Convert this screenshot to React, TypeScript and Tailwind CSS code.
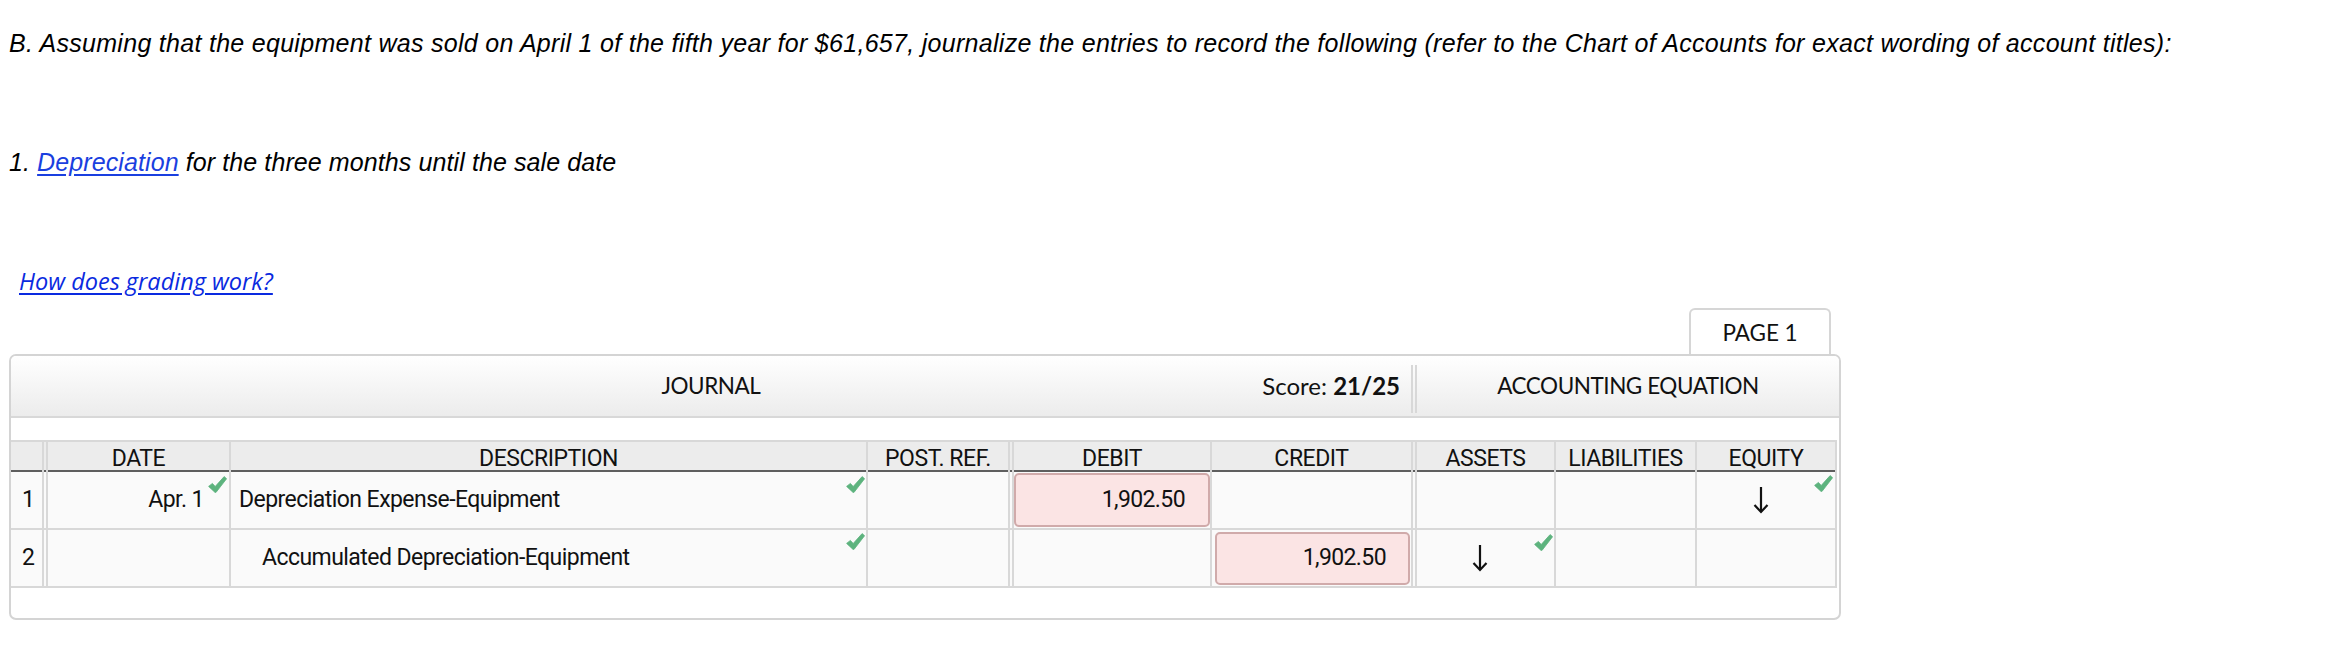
const Q1 =
  'B. Assuming that the equipment was sold on April 1 of the fifth year for $61,657, journalize the entries to record the following (refer to the Chart of Accounts for exact wording of account titles):';
const HOW = 'How does grading work?';

function Check({ className }: { className: string }) {
  return (
    <svg
      className={`absolute ${className}`}
      width="19"
      height="17"
      viewBox="0 0 19 17"
      fill="#5db37e"
      stroke="#5db37e"
      strokeWidth="0.8"
      strokeLinejoin="round"
    >
      <path d="M0.6 10.4 L4.4 7.4 L7.2 10.5 L16.1 0.6 L18.6 2.7 L8.1 16.3 Q7.4 16.9 6.8 16.2 Z" />
    </svg>
  );
}

function Arrow() {
  return (
    <svg width="16" height="28" viewBox="0 0 16 28" fill="none" stroke="#111" strokeWidth="2.2">
      <line x1="8" y1="1" x2="8" y2="26" />
      <path d="M1.5 19 L8 26 L14.5 19" strokeLinejoin="miter" />
    </svg>
  );
}

const cols = 'grid grid-cols-[37px_183px_637px_146px_198px_205px_139px_141px_140px] w-[1826px]';
const hcell = 'h-full flex items-center justify-center';
const b = 'border-r-2 border-[#d8d8d8]';
const bd = 'border-r-[6px] border-double border-[#d8d8d8]';

export default function App() {
  return (
    <div className="relative w-[2346px] h-[666px] bg-white overflow-hidden text-black">
      <p className="pt-[29px] pl-[9px] text-[25px] leading-[28px] tracking-[0.29px] italic font-['Liberation_Sans',Arial,sans-serif] whitespace-nowrap">
        {Q1}
      </p>
      <p className="mt-[91px] pl-[9px] text-[25px] leading-[28px] tracking-[0.1px] italic font-['Liberation_Sans',Arial,sans-serif] whitespace-nowrap">
        1. <span className="text-[#1a3fe0] underline underline-offset-[3px]">Depreciation</span> for the three months until the
        sale date
      </p>
      <p className="mt-[91px] pl-[19px] text-[23.5px] leading-[28px] italic font-['Open_Sans',sans-serif]">
        <span className="text-[#0a2ae0] underline underline-offset-[3px]">{HOW}</span>
      </p>

      <div className="mt-[13px] ml-[9px] w-[1832px] font-['Roboto',sans-serif] text-[23px] tracking-[-0.55px] text-[#111]">
        <div className="flex justify-end pr-[10px]">
          <div className="w-[142px] h-[46px] border-2 border-b-0 border-[#d6d6d6] rounded-t-[6px] bg-white flex items-center justify-center pt-[2px] font-['Lato',sans-serif] text-[22.5px] tracking-[-0.1px]">
            PAGE 1
          </div>
        </div>
        <div className="h-[266px] border-2 border-[#d4d4d4] rounded-[7px] overflow-hidden bg-white">
          <div className="h-[62px] flex border-b-2 border-[#d8d8d8] bg-linear-to-b from-white to-[#ececec] font-['Lato',sans-serif] text-[22.5px] tracking-[-0.45px]">
            <div className="w-[1400px] grid grid-cols-[1fr_auto_1fr] items-center">
              <div />
              <div>JOURNAL</div>
              <div className="justify-self-end pr-[11px] text-[24px] tracking-[0px]">
                Score: <span className="font-bold">21/25</span>
              </div>
            </div>
            <div className="w-[6px] mt-[9px] mb-[3px] border-l-2 border-r-2 border-[#d8d8d8]" />
            <div className="flex-1 flex items-center justify-center">ACCOUNTING EQUATION</div>
          </div>

          <div className="mt-[22px]">
            <div className={`${cols} h-[32px] bg-[#ececec] border-t-2 border-[#d8d8d8] border-b-2 border-b-[#5e5e5e] tracking-[-0.45px]`}>
              <div className={`h-full ${bd}`} />
              <div className={`${hcell} ${b}`}>DATE</div>
              <div className={`${hcell} ${b}`}>DESCRIPTION</div>
              <div className={`${hcell} ${bd}`}>POST. REF.</div>
              <div className={`${hcell} ${b}`}>DEBIT</div>
              <div className={`${hcell} ${bd}`}>CREDIT</div>
              <div className={`${hcell} ${b}`}>ASSETS</div>
              <div className={`${hcell} ${b}`}>LIABILITIES</div>
              <div className={`${hcell} ${b}`}>EQUITY</div>
            </div>

            <div className={`${cols} h-[58px] bg-[#fafafa] border-b-2 border-[#d8d8d8]`}>
              <div className={`flex items-center pl-[11px] ${bd}`}>1</div>
              <div className={`relative flex items-center justify-end pr-[25px] ${b}`}>
                Apr. 1
                <Check className="top-[4px] right-[2px]" />
              </div>
              <div className={`relative flex items-center pl-[8px] ${b}`}>
                Depreciation Expense-Equipment
                <Check className="top-[4px] right-[1px]" />
              </div>
              <div className={bd} />
              <div className={`${b} py-[1px]`}>
                <div className="h-full flex items-center justify-end pr-[23px] bg-[#fbe4e4] border-2 border-[#d0aaaa] rounded-[5px] tracking-[-0.6px]">
                  1,902.50
                </div>
              </div>
              <div className={bd} />
              <div className={b} />
              <div className={b} />
              <div className={`relative flex items-center justify-center pr-[11px] ${b}`}>
                <Arrow />
                <Check className="top-[3px] right-[2px]" />
              </div>
            </div>

            <div className={`${cols} h-[58px] bg-[#fafafa] border-b-2 border-[#d8d8d8]`}>
              <div className={`flex items-center pl-[11px] ${bd}`}>2</div>
              <div className={b} />
              <div className={`relative flex items-center pl-[31px] ${b}`}>
                Accumulated Depreciation-Equipment
                <Check className="top-[3px] right-[1px]" />
              </div>
              <div className={bd} />
              <div className={b} />
              <div className={`${bd} pt-[2px] pb-[1px] pl-[3px] pr-[1px]`}>
                <div className="h-full flex items-center justify-end pr-[22px] bg-[#fbe4e4] border-2 border-[#d0aaaa] rounded-[5px] tracking-[-0.6px]">
                  1,902.50
                </div>
              </div>
              <div className={`relative flex items-center justify-center pr-[11px] ${b}`}>
                <Arrow />
                <Check className="top-[4px] right-[1px]" />
              </div>
              <div className={b} />
              <div className={b} />
            </div>
          </div>
        </div>
      </div>
    </div>
  );
}
